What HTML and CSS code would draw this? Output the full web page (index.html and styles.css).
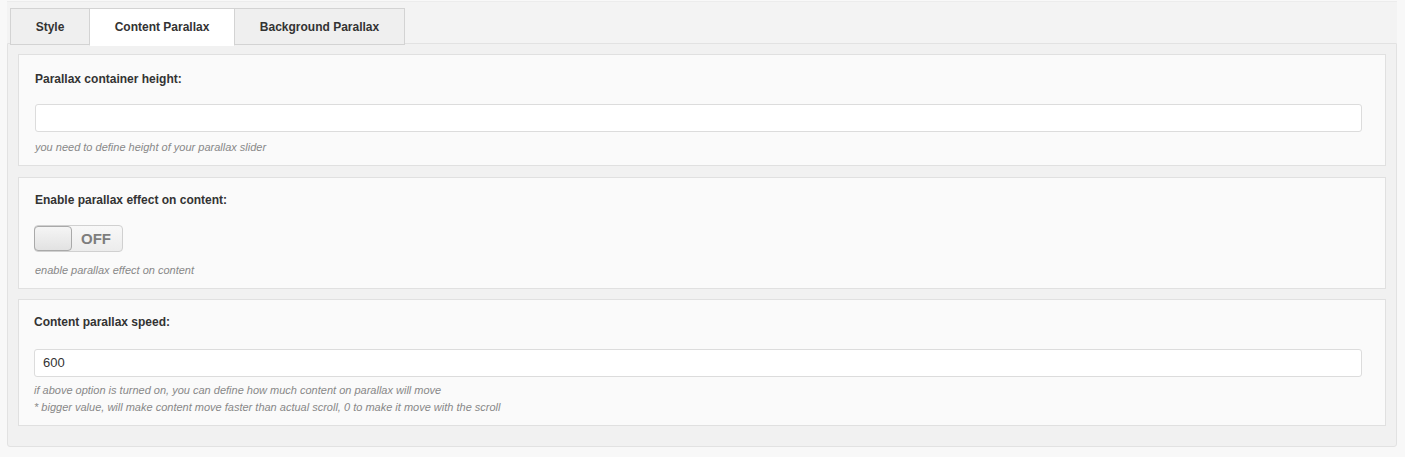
FILE: index.html
```html
<!DOCTYPE html>
<html>
<head>
<meta charset="utf-8">
<link rel="stylesheet" href="styles.css">
</head>
<body>
<div class="panel">
  <div class="tabs">
    <div class="tab tab-style">Style</div>
    <div class="tab tab-content active">Content Parallax</div>
    <div class="tab tab-bg">Background Parallax</div>
  </div>
  <div class="body">
    <div class="section s1">
      <div class="label">Parallax container height:</div>
      <div class="input"></div>
      <div class="desc">you need to define height of your parallax slider</div>
    </div>
    <div class="section s2">
      <div class="label">Enable parallax effect on content:</div>
      <div class="toggle"><div class="handle"></div><span class="off">OFF</span></div>
      <div class="desc">enable parallax effect on content</div>
    </div>
    <div class="section s3">
      <div class="label">Content parallax speed:</div>
      <div class="input input-speed">600</div>
      <div class="desc">if above option is turned on, you can define how much content on parallax will move<br>* bigger value, will make content move faster than actual scroll, 0 to make it move with the scroll</div>
    </div>
  </div>
</div>
</body>
</html>
```
FILE: styles.css
```css
html, body {
  margin: 0;
  padding: 0;
  background: #f8f8f8;
  font-family: "Liberation Sans", Arial, sans-serif;
}
.panel {
  margin: 1px 8px 0 7px;
  width: 1390px;
}
.tabs {
  display: flex;
  height: 42px;
  box-sizing: border-box;
  padding: 6px 0 0 3px;
  background: #f3f3f3;
  border-top: 1px solid #ececec;
}
.tab {
  box-sizing: border-box;
  height: 37px;
  border: 1px solid #d3d3d3;
  background: #efefef;
  font-size: 12px;
  font-weight: bold;
  color: #333;
  display: flex;
  align-items: center;
  justify-content: center;
  margin-right: -1px;
}
.tab-style { width: 80px; }
.tab-content { width: 146px; }
.tab-bg { width: 171px; }
.tab.active {
  background: #fff;
  border-bottom-color: #fff;
  height: 38px;
}
.body {
  background: #f1f1f1;
  border: 1px solid #e2e2e2;
  border-radius: 0 0 3px 3px;
  padding: 10px 10px 20px 10px;
}
.section {
  background: #fafafa;
  border: 1px solid #e0e0e0;
  padding: 14px 23px 10px 16px;
  margin-bottom: 11px;
}
.s1 { padding-top: 16px; }
.s2 { margin-bottom: 10px; }
.s3 {
  margin-bottom: 0;
  padding-left: 15px;
  padding-bottom: 9px;
}
.label {
  font-size: 12px;
  font-weight: bold;
  color: #333;
  line-height: 16px;
  margin-bottom: 17px;
}
.s3 .label { margin-bottom: 19px; }
.input {
  height: 28px;
  box-sizing: border-box;
  background: #fff;
  border: 1px solid #dcdcdc;
  border-radius: 3px;
  font-size: 13px;
  color: #333;
  line-height: 26px;
  padding-left: 8px;
}
.desc {
  margin-top: 7px;
  font-size: 11px;
  font-style: italic;
  color: #888;
  line-height: 16px;
}
.s3 .desc { line-height: 17px; margin-top: 5px; }
.toggle {
  display: flex;
  align-items: center;
  width: 89px;
  height: 27px;
  box-sizing: border-box;
  border: 1px solid #d0d0d0;
  border-radius: 4px;
  background: linear-gradient(#f8f8f8, #ececec);
  margin-left: -1px;
  margin-bottom: 10px;
}
.handle {
  width: 38px;
  height: 25px;
  box-sizing: border-box;
  border: 1px solid #a9a9a9;
  border-radius: 4px;
  background: linear-gradient(#f5f5f5, #e2e2e2);
  margin-left: -1px;
}
.off {
  flex: 1;
  text-align: center;
  font-size: 15px;
  font-weight: bold;
  color: #7d7d7d;
  padding-right: 2px;
}
```
